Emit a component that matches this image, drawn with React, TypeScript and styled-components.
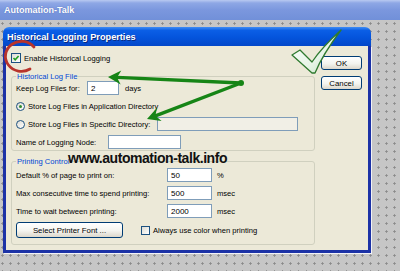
import styled, { createGlobalStyle } from "styled-components";

const GlobalStyle = createGlobalStyle`
  html, body {
    margin: 0;
    padding: 0;
  }
  body {
    font-family: "Liberation Sans", Arial, sans-serif;
  }
`;

const Page = styled.div`
  position: relative;
  width: 400px;
  height: 271px;
  overflow: hidden;
  background-color: #c6c6c6;
  background-image: radial-gradient(circle at 1.5px 1.5px, #8a8a8a 0.9px, transparent 1.4px);
  background-size: 8px 8px;
  background-position: 1px 22px;
`;

const AppBar = styled.div`
  height: 20px;
  display: flex;
  align-items: center;
  padding-left: 4px;
  background: linear-gradient(#b9c9f1 0, #8ea7e5 3px, #7b97de 50%, #7190d9 100%);
  color: #fff;
  font-weight: bold;
  font-size: 9px;
  text-shadow: 0 0 1px #4a62ad;
`;

const Desk = styled.div`
  padding: 7px 0 0 3px;
`;

const Dialog = styled.div`
  width: 368px;
  display: flex;
  flex-direction: column;
`;

const TitleBar = styled.div`
  height: 19px;
  display: flex;
  align-items: center;
  padding-left: 4px;
  border-radius: 6px 6px 0 0;
  background: linear-gradient(#3f8cf3 0%, #0b5fe6 18%, #0454dc 55%, #0347c9 100%);
  color: #fff;
  font-weight: bold;
  font-size: 9.2px;
  text-shadow: 1px 1px 0 #0a2a80;
`;

const Body = styled.div`
  display: flex;
  background: #ece9d8;
  border: 3px solid #1c32a6;
  border-top: none;
  padding: 7px 0 5px 5px;
  box-shadow: 1px 1px 0 #f2f2f6;
  font-size: 7.6px;
  color: #000;
`;

const LeftCol = styled.div`
  width: 304px;
  display: flex;
  flex-direction: column;
`;

const RightCol = styled.div`
  margin-left: 6px;
  margin-top: 3px;
  display: flex;
  flex-direction: column;
  gap: 6px;
`;

const Row = styled.div<{ $h?: number }>`
  display: flex;
  align-items: center;
  height: ${(p) => p.$h ?? 14}px;
  white-space: nowrap;
`;

const Label = styled.span<{ $w?: number; $ml?: number }>`
  display: inline-block;
  width: ${(p) => (p.$w ? `${p.$w}px` : "auto")};
  margin-left: ${(p) => p.$ml ?? 0}px;
  flex-shrink: 0;
`;

const Suffix = styled.span`
  margin-left: 5px;
`;

const Group = styled.fieldset<{ $mt: number }>`
  margin: ${(p) => p.$mt}px 0 0 0;
  padding: 0 4px 1px 4px;
  border: 1px solid #d0d0bf;
  border-radius: 3px;
  min-width: 0;
`;

const Legend = styled.legend`
  color: #0046d5;
  font-size: 7.6px;
  line-height: 9px;
  padding: 0 1px;
`;

const Stack = styled.div<{ $pt?: number; $pb?: number }>`
  display: flex;
  flex-direction: column;
  gap: 4px;
  padding-top: ${(p) => p.$pt ?? 0}px;
  padding-bottom: ${(p) => p.$pb ?? 0}px;
`;

const Field = styled.div<{ $w: number; $disabled?: boolean }>`
  width: ${(p) => p.$w}px;
  height: 14px;
  box-sizing: border-box;
  border: 1px solid #7f9db9;
  background: ${(p) => (p.$disabled ? "#f1efe6" : "#fff")};
  padding-left: 3px;
  display: flex;
  align-items: center;
  font-size: 8px;
  flex-shrink: 0;
`;

const Box = styled.span<{ $size: number }>`
  width: ${(p) => p.$size}px;
  height: ${(p) => p.$size}px;
  box-sizing: border-box;
  border: 1px solid #1c5180;
  background: linear-gradient(135deg, #dcdcd4, #fff);
  margin-right: 3px;
  display: inline-flex;
  align-items: center;
  justify-content: center;
  flex-shrink: 0;
`;

const Radio = styled.span<{ $on?: boolean }>`
  width: 9px;
  height: 9px;
  box-sizing: border-box;
  border-radius: 50%;
  border: 1px solid #1c5180;
  background: linear-gradient(135deg, #dcdcd4, #fff);
  margin-right: 3px;
  display: inline-flex;
  align-items: center;
  justify-content: center;
  flex-shrink: 0;
  &::after {
    content: "";
    display: ${(p) => (p.$on ? "block" : "none")};
    width: 3px;
    height: 3px;
    border-radius: 50%;
    background: #2e8a2e;
  }
`;

const Button = styled.div<{ $w: number; $h: number; $mr?: number }>`
  width: ${(p) => p.$w}px;
  height: ${(p) => p.$h}px;
  margin-right: ${(p) => p.$mr ?? 0}px;
  box-sizing: border-box;
  border: 1px solid #003c74;
  border-radius: 3px;
  background: linear-gradient(#ffffff, #f4f4ef 55%, #dcd7cb);
  display: flex;
  align-items: center;
  justify-content: center;
  font-size: 7.8px;
  flex-shrink: 0;
`;

const Watermark = styled.div`
  position: absolute;
  left: 68px;
  top: 151px;
  font-family: "Liberation Sans", Arial, sans-serif;
  font-weight: bold;
  font-size: 14px;
  line-height: 14px;
  letter-spacing: -0.45px;
  color: #111;
`;

const Overlay = styled.svg`
  position: absolute;
  left: 0;
  top: 0;
  pointer-events: none;
`;

const Check = ({ size }: { size: number }) => (
  <Box $size={size}>
    <svg width={size - 2} height={size - 2} viewBox="0 0 8 8">
      <polyline points="1.5,4 3.2,5.8 6.6,2" fill="none" stroke="#21a121" strokeWidth="1.6" />
    </svg>
  </Box>
);

export default function App() {
  return (
    <Page>
      <GlobalStyle />
      <AppBar>Automation-Talk</AppBar>
      <Desk>
        <Dialog>
          <TitleBar>Historical Logging Properties</TitleBar>
          <Body>
            <LeftCol>
              <Row $h={10}>
                <Check size={10} />
                <span>Enable Historical Logging</span>
              </Row>

              <Group $mt={9}>
                <Legend>Historical Log File</Legend>
                <Stack>
                  <Row>
                    <Label $w={71}>Keep Log Files for:</Label>
                    <Field $w={32}>2</Field>
                    <Label $ml={6}>days</Label>
                  </Row>
                  <Row>
                    <Radio $on />
                    <span>Store Log Files in Application Directory</span>
                  </Row>
                  <Row>
                    <Radio />
                    <Label $w={129}>Store Log Files in Specific Directory:</Label>
                    <Field $w={141} $disabled />
                  </Row>
                  <Row>
                    <Label $w={92}>Name of Logging Node:</Label>
                    <Field $w={73} />
                  </Row>
                </Stack>
              </Group>

              <Group $mt={6}>
                <Legend>Printing Control</Legend>
                <Stack $pt={2} $pb={5}>
                  <Row>
                    <Label $w={151}>Default % of page to print on:</Label>
                    <Field $w={45}>50</Field>
                    <Suffix>%</Suffix>
                  </Row>
                  <Row>
                    <Label $w={151}>Max consecutive time to spend printing:</Label>
                    <Field $w={45}>500</Field>
                    <Suffix>msec</Suffix>
                  </Row>
                  <Row>
                    <Label $w={151}>Time to wait between printing:</Label>
                    <Field $w={45}>2000</Field>
                    <Suffix>msec</Suffix>
                  </Row>
                  <Row $h={16}>
                    <Button $w={107} $h={16} $mr={18}>
                      Select Printer Font ...
                    </Button>
                    <Box $size={9} />
                    <span>Always use color when printing</span>
                  </Row>
                </Stack>
              </Group>
            </LeftCol>

            <RightCol>
              <Button $w={41} $h={14}>OK</Button>
              <Button $w={41} $h={14}>Cancel</Button>
            </RightCol>
          </Body>
        </Dialog>
      </Desk>

      <Watermark>www.automation-talk.info</Watermark>

      <Overlay width={400} height={271} viewBox="0 0 400 271">
        <defs>
          <linearGradient id="tick" x1="0" y1="0" x2="1" y2="1">
            <stop offset="0" stopColor="#ffffff" />
            <stop offset="0.6" stopColor="#e6f4e6" />
            <stop offset="1" stopColor="#b9dcb9" />
          </linearGradient>
        </defs>

        {/* red ring round the checkbox */}
        <path d="M 34 47 A 16 15 0 1 0 30 69" fill="none" stroke="#b8342b" strokeWidth="2.8" strokeLinecap="round" />

        {/* green arrows */}
        <g stroke="#168516" strokeWidth="3.4" strokeLinecap="round" fill="none">
          <line x1="241" y1="83" x2="117" y2="77.4" />
          <line x1="241" y1="83" x2="155.4" y2="115.8" />
        </g>
        <circle cx="241" cy="83" r="3" fill="#168516" />
        <polygon points="108,77 121.3,70.6 117,77.4 120.7,84.6" fill="#168516" />
        <polygon points="147,119 157,107.8 155.4,115.8 161.6,121" fill="#168516" />

        {/* big tick */}
        <path
          d="M292 55 L300 50 L312 62 C320 50 330 40 341 30 C332 42 322 56 315 73 L312 73 Z"
          fill="url(#tick)"
          stroke="#2f7a2f"
          strokeWidth="1.3"
          strokeLinejoin="round"
        />
      </Overlay>
    </Page>
  );
}
